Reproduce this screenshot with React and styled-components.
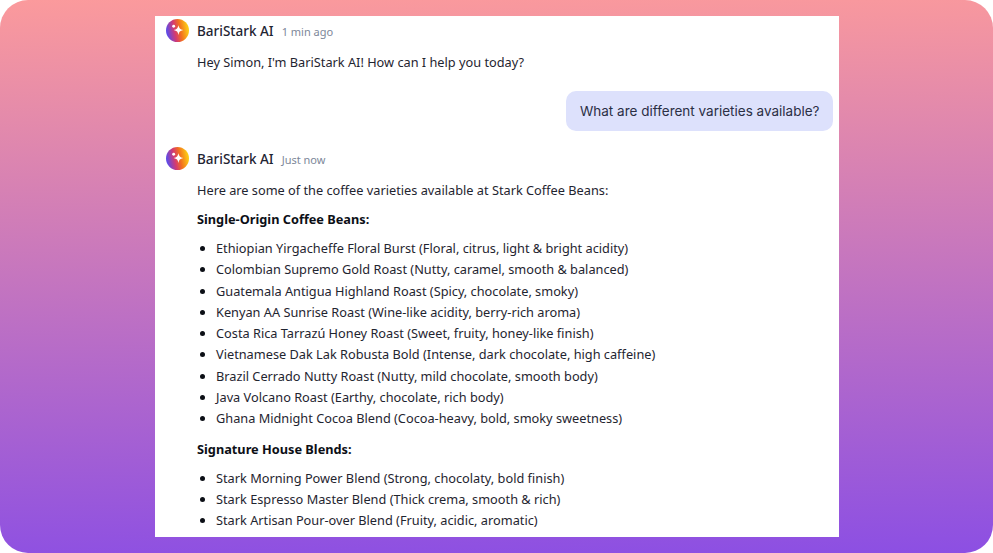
import React from "react";
import styled, { createGlobalStyle } from "styled-components";

const Global = createGlobalStyle`
  html, body { margin: 0; padding: 0; background: #fff; }
  #root { width: 993px; height: 553px; overflow: hidden; }
`;
const Frame = styled.div`
  width: 993px; height: 553px; box-sizing: border-box; padding: 16px 154px 16px 155px;
  border-radius: 28px;
  background: linear-gradient(179deg, #fb9a9c 0%, #8c4fe3 100%);
`;
const Panel = styled.main`
  height: 521px; background: #fff; overflow: hidden; box-sizing: border-box; padding: 3px 6px 0 11px;
  font-family: "Noto Sans", "Open Sans", sans-serif; font-size: 12.75px; color: #1f2530;
`;
const Header = styled.div`
  display: flex; align-items: center; height: 24px; gap: 8px;
`;
const Avatar = styled.svg`width: 23px; height: 23px; flex: none; margin-top: -2px;`;
const Name = styled.span`font-size: 13.5px; font-weight: 500; color: #1f2533;`;
const Time = styled.span`font-size: 11px; color: #7d8799; padding-top: 1px;`;
const Body = styled.div`padding-left: 31px;`;
const Para = styled.p`margin: 0; line-height: 21px;`;
const Greeting = styled(Para)`margin-top: 9px;`;
const UserRow = styled.div`display: flex; justify-content: flex-end; margin-top: 18px;`;
const Bubble = styled.div`
  height: 40px; box-sizing: border-box; padding: 0 13.5px; display: flex; align-items: center;
  background: #dde1fc; border-radius: 10px; font-family: Inter, sans-serif; font-size: 13.5px; color: #2b2f45;
`;
const Heading = styled.h4`margin: ${p => p.$top}px 0 0; font-size: 12.75px; line-height: 21px; font-weight: 700; color: #0c0f16;`;
const List = styled.ul`margin: 8px 0 0; padding: 0 0 0 19px; list-style: disc;`;
const Item = styled.li`height: 21.3px; line-height: 21.3px; &::marker { color: #0c0f16; }`;
const SecondHeader = styled(Header)`margin-top: 16px;`;

const Logo = ({ id }) => (
  <Avatar viewBox="0 0 24 24">
    <defs>
      <linearGradient id={id} x1="0" y1="0.6" x2="1" y2="0.4">
        <stop offset="0.05" stopColor="#5f4ae6" />
        <stop offset="0.38" stopColor="#d53a70" />
        <stop offset="0.62" stopColor="#f2701f" />
        <stop offset="0.95" stopColor="#fcc916" />
      </linearGradient>
    </defs>
    <circle cx="12" cy="12" r="12" fill={`url(#${id})`} />
    <path d="M13 6.5c.5 3 1.7 4.3 5 5-3.3.7-4.5 2-5 5.3-.5-3.3-1.7-4.6-5-5.3 3.3-.7 4.5-2 5-5z" fill="#fff" />
    <circle cx="8" cy="7.6" r="1.5" fill="#fff" />
  </Avatar>
);

const origins = [
  "Ethiopian Yirgacheffe Floral Burst (Floral, citrus, light & bright acidity)",
  "Colombian Supremo Gold Roast (Nutty, caramel, smooth & balanced)",
  "Guatemala Antigua Highland Roast (Spicy, chocolate, smoky)",
  "Kenyan AA Sunrise Roast (Wine-like acidity, berry-rich aroma)",
  "Costa Rica Tarrazú Honey Roast (Sweet, fruity, honey-like finish)",
  "Vietnamese Dak Lak Robusta Bold (Intense, dark chocolate, high caffeine)",
  "Brazil Cerrado Nutty Roast (Nutty, mild chocolate, smooth body)",
  "Java Volcano Roast (Earthy, chocolate, rich body)",
  "Ghana Midnight Cocoa Blend (Cocoa-heavy, bold, smoky sweetness)",
];
const blends = [
  "Stark Morning Power Blend (Strong, chocolaty, bold finish)",
  "Stark Espresso Master Blend (Thick crema, smooth & rich)",
  "Stark Artisan Pour-over Blend (Fruity, acidic, aromatic)",
];

export default function App() {
  return (
    <Frame>
      <Global />
      <Panel>
        <Header>
          <Logo id="a1" />
          <Name>BariStark AI</Name>
          <Time>1 min ago</Time>
        </Header>
        <Body>
          <Greeting>Hey Simon, I'm BariStark AI! How can I help you today?</Greeting>
        </Body>
        <UserRow><Bubble>What are different varieties available?</Bubble></UserRow>
        <SecondHeader>
          <Logo id="a2" />
          <Name>BariStark AI</Name>
          <Time>Just now</Time>
        </SecondHeader>
        <Body>
          <Greeting>Here are some of the coffee varieties available at Stark Coffee Beans:</Greeting>
          <Heading $top={8}>Single-Origin Coffee Beans:</Heading>
          <List>{origins.map(t => <Item key={t}>{t}</Item>)}</List>
          <Heading $top={9}>Signature House Blends:</Heading>
          <List>{blends.map(t => <Item key={t}>{t}</Item>)}</List>
        </Body>
      </Panel>
    </Frame>
  );
}
